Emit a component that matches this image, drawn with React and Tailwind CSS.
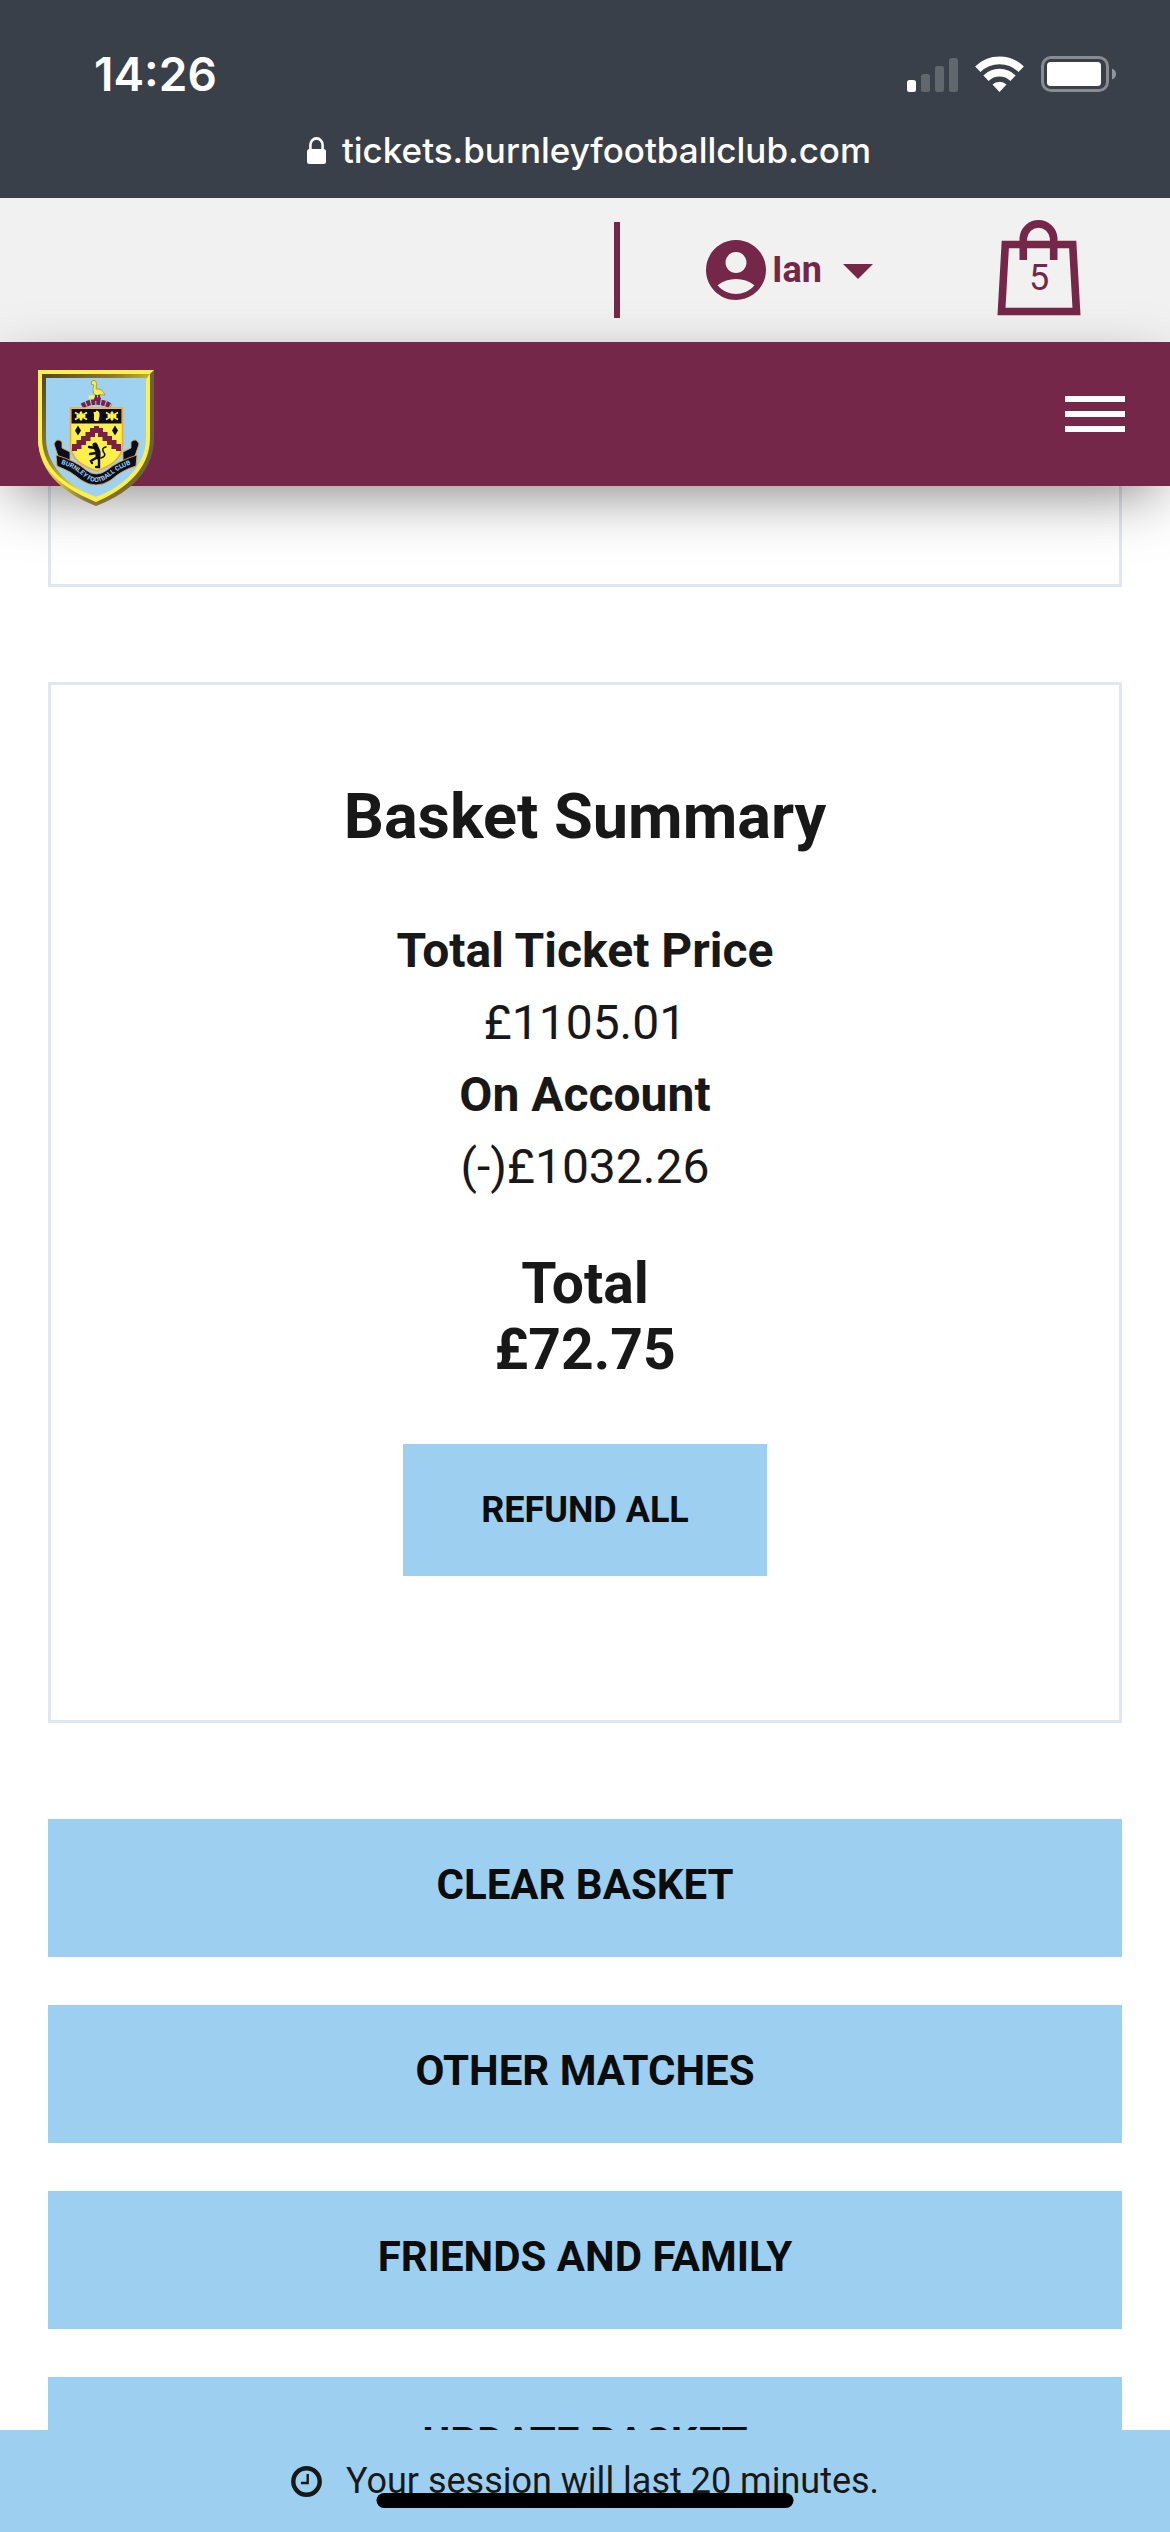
import { MdAccountCircle, MdArrowDropDown } from "react-icons/md";

const actions = ["Clear Basket", "Other Matches", "Friends and Family", "Update Basket"];

function SignalIcon() {
  return (
    <svg width="51" height="34" viewBox="0 0 51 34" fill="#fff">
      <rect x="0" y="22" width="9" height="12" rx="2.5" />
      <g opacity="0.2">
        <rect x="14" y="16" width="9" height="18" rx="2.5" />
        <rect x="28" y="8" width="9" height="26" rx="2.5" />
        <rect x="42" y="0" width="9" height="34" rx="2.5" />
      </g>
    </svg>
  );
}

function WifiIcon() {
  return (
    <svg width="49" height="36" viewBox="0 0 49 36">
      <g fill="none" stroke="#fff" strokeWidth="7.6">
        <path d="M2.8 13.2 A31 31 0 0 1 46.2 13.2" />
        <path d="M11 22.2 A19.2 19.2 0 0 1 38 22.2" />
      </g>
      <path d="M24.5 36 L17.5 28.6 A10 10 0 0 1 31.5 28.6 Z" fill="#fff" />
    </svg>
  );
}

function BatteryIcon() {
  return (
    <svg width="75" height="36" viewBox="0 0 75 36">
      <rect x="1.5" y="1.5" width="65" height="33" rx="8.5" fill="none" stroke="#fff" strokeOpacity="0.4" strokeWidth="3" />
      <rect x="6" y="6" width="54" height="24" rx="3.5" fill="#fff" />
      <path d="M71 12.5 Q75 14 75 18 Q75 22 71 23.5 Z" fill="#fff" fillOpacity="0.45" />
    </svg>
  );
}

function LockIcon() {
  return (
    <svg width="19" height="27" viewBox="0 0 19 27">
      <rect x="0" y="12" width="19" height="15" rx="2.5" fill="#fff" />
      <path d="M3.4 13 V8 A6.1 6.6 0 0 1 15.6 8 V13" fill="none" stroke="#fff" strokeWidth="2.6" />
    </svg>
  );
}

function StatusBar() {
  return (
    <div className="bg-[#3a4049] text-white font-[Inter,sans-serif]">
      <div className="flex items-center justify-between pt-[46px] pl-[94px] pr-[54px]">
        <span className="text-[46px] leading-[56px] font-semibold">14:26</span>
        <div className="flex items-end gap-[17px]">
          <SignalIcon />
          <WifiIcon />
          <BatteryIcon />
        </div>
      </div>
      <div className="flex items-center justify-center gap-4 pt-6 pb-6 pl-2">
        <LockIcon />
        <span className="text-[35px] leading-[48px] font-medium">tickets.burnleyfootballclub.com</span>
      </div>
    </div>
  );
}

function BagIcon() {
  return (
    <svg width="84" height="98" viewBox="0 0 84 98" fill="none" stroke="#75274a">
      <path d="M8.3 26.5 H75.7 L79.5 93.5 H4.5 Z" strokeWidth="7.6" />
      <path d="M26.3 42 V20 A15.3 16 0 0 1 56.7 20 V42" strokeWidth="7.6" />
    </svg>
  );
}

function AccountBar() {
  return (
    <div className="flex h-36 items-center bg-[#f1f1f1] text-[#75274a] pr-[89px]">
      <div className="ml-auto h-24 w-[6px] bg-[#75274a]" />
      <button type="button" className="ml-20 flex items-center">
        <MdAccountCircle size={72} />
        <span className="text-[36px] leading-[48px] font-bold">Ian</span>
        <MdArrowDropDown size={72} />
      </button>
      <a href="#basket" className="relative ml-[103px] pb-1.5">
        <BagIcon />
        <span className="absolute inset-x-0 top-9 text-center text-[36px] leading-[48px]">5</span>
      </a>
    </div>
  );
}

function Bee({ x }) {
  return (
    <g fill="#fdf04b" stroke="#fdf04b" transform={`translate(${x} 46)`}>
      <ellipse cx="0" cy="0" rx="1.6" ry="4.6" strokeWidth="0.4" />
      <path d="M-6 -3.5 L6 3.5 M6 -3.5 L-6 3.5 M-4.5 0 H4.5" strokeWidth="1.8" />
    </g>
  );
}

function ClubCrest() {
  return (
    <svg width="116" height="136" viewBox="0 0 116 136" role="img" aria-label="Burnley Football Club">
      <defs>
        <linearGradient id="rim" x1="0" y1="0" x2="1" y2="0">
          <stop offset="0" stopColor="#fdf04b" />
          <stop offset="0.4" stopColor="#8a7a36" />
          <stop offset="1" stopColor="#6e6032" />
        </linearGradient>
        <linearGradient id="bevel" x1="0" y1="0" x2="1" y2="1">
          <stop offset="0" stopColor="#4f4528" />
          <stop offset="0.35" stopColor="#8c7c38" />
          <stop offset="0.7" stopColor="#fdf04b" />
          <stop offset="1" stopColor="#fdf04b" />
        </linearGradient>
        <path id="motto" d="M17 92 Q36 97 46 107 Q58 117 71 107 Q81 98 99 92" />
      </defs>
      <path d="M0 0 H116 V68 C116 106 84 126 58 136 C32 126 0 106 0 68 Z" fill="url(#rim)" />
      <path d="M0 0 H116 L112 4 V68 C112 102 82 122 58 132 C34 122 0 104 0 68 Z" fill="#fdf04b" />
      <path d="M4 4 H112 L108 9 V68 C108 99 80 119 58 127 C33 119 4 101 4 68 Z" fill="url(#bevel)" />
      <path d="M8 8 H108 V68 C108 99 80 119 58 127 C36 119 8 99 8 68 Z" fill="#9fd2f0" />

      {/* stork and wreath */}
      <path d="M54 11 Q58 9 58.5 14 L58 19 Q64 18 67 25 L62 24.5 Q58 27 55.5 23 Q54 19 56 15 L53 14 Z" fill="#fdf04b" stroke="#a58d2c" strokeWidth="0.8" />
      <path d="M58 25 V31 M61 25 V31 M56 28.5 H63" stroke="#7a1f45" strokeWidth="2" />
      <ellipse cx="53.5" cy="27" rx="3" ry="2" fill="#fdf04b" />
      <path d="M44 36 Q58 28 73 36" fill="none" stroke="#7a1f45" strokeWidth="5.5" strokeDasharray="4 1" />

      {/* shield */}
      <path d="M32.5 38 H84.5 V74 C84.5 90 72 96 58.5 101 C45 96 32.5 90 32.5 74 Z" fill="#fdf04b" stroke="#f2a93b" strokeWidth="1.6" />
      <path d="M33.5 39 H83.5 V53.5 H33.5 Z" fill="#0b0c1f" />
      <Bee x={43} />
      <Bee x={74} />
      <path d="M56 50 V45 L55.5 42 L57.5 42 L58.5 40.5 L60 41 L61.5 43 V46 L60.5 51 H57 Z" fill="#fdf04b" />
      <path
        d="M36.5 81 V76.5 H41 V72.5 H45.5 V68.5 H50 V64.5 H54.5 V60.5 H62.5 V64.5 H67 V68.5 H71.5 V72.5 H76 V76.5 H80.5 V81"
        fill="none"
        stroke="#7a1f45"
        strokeWidth="5"
      />
      <path d="M56 56 H61 V60 H56 Z" fill="#7a1f45" />
      <path d="M40 55.5 L43 60.5 L40 65.5 L37 60.5 Z M77 55.5 L80 60.5 L77 65.5 L74 60.5 Z" fill="#0b0c1f" />
      <g fill="none" stroke="#0b0c1f" strokeLinecap="round">
        <path d="M57 75 L60 82 L60 87" strokeWidth="5" />
        <path d="M57 78 L51 77 M58 83 L52 84 M58 88 L53 91 L54 93 M61 88 L61 97 L58 97" strokeWidth="2.4" />
        <path d="M63 88 Q69 86 65.5 82 Q63 78 68 77" strokeWidth="1.5" />
      </g>

      {/* scroll */}
      <g fill="#0b0c1f" stroke="#e0a93e" strokeWidth="0.9">
        <path d="M16 74 Q19 67 24 72 V78 L32 82 V91 L21 89 Z" />
        <path d="M101 74 Q98 67 93 72 V78 L85 82 V91 L96 89 Z" />
        <path d="M18 85 Q38 91 48 100 Q58 108 69 100 Q80 91 99 85 L98 96 Q84 100 73 110 Q58 120 43 110 Q33 101 19 96 Z" />
      </g>
      <text fill="#9fd2f0" fontFamily="Roboto, sans-serif" fontSize="6.5" fontWeight="700">
        <textPath href="#motto" startOffset="50%" textAnchor="middle">BURNLEY FOOTBALL CLUB</textPath>
      </text>
    </svg>
  );
}

function NavBar() {
  return (
    <nav className="relative z-10 flex h-36 items-center justify-between bg-[#75274a] pl-[38px] pr-[45px] shadow-[0_18px_60px_-12px_rgba(0,0,0,0.5)]">
      <a href="#home" className="mt-7 h-[116px]">
        <ClubCrest />
      </a>
      <button type="button" aria-label="Menu" className="flex w-[60px] flex-col gap-[9px]">
        <span className="h-[6px] bg-white" />
        <span className="h-[6px] bg-white" />
        <span className="h-[6px] bg-white" />
      </button>
    </nav>
  );
}

function BasketSummary() {
  return (
    <section className="flex flex-col items-center border-3 border-[#e2e6f0] pt-[94px] pb-36 text-[#181818]">
      <h2 className="text-[63px] leading-[76px] font-bold">Basket Summary</h2>
      <dl className="mt-[60px] text-center text-[48px] leading-[72px]">
        <dt className="font-bold">Total Ticket Price</dt>
        <dd>£1105.01</dd>
        <dt className="font-bold">On Account</dt>
        <dd>(-)£1032.26</dd>
      </dl>
      <p className="mt-12 text-center text-[57px] leading-[66px] font-bold">
        Total
        <br />
        £72.75
      </p>
      <button type="button" className="mt-[61px] h-[132px] w-[364px] bg-[#9dcff0] text-[36px] font-bold text-[#0c0c0c] uppercase">
        Refund All
      </button>
    </section>
  );
}

function SessionBar() {
  return (
    <footer className="fixed inset-x-0 bottom-0 z-20 flex h-[102px] items-center justify-center gap-6 bg-[#9dcff0] text-[#181818]">
      <svg width="31" height="31" viewBox="0 0 31 31" fill="none" stroke="currentColor">
        <circle cx="15.5" cy="15.5" r="13.2" strokeWidth="4.4" />
        <path d="M16.7 8 V17 H10" strokeWidth="2.4" />
      </svg>
      <p className="text-[36px] leading-[48px]">Your session will last 20 minutes.</p>
      <div className="absolute bottom-6 left-1/2 h-[15px] w-[417px] -translate-x-1/2 rounded-full bg-black" />
    </footer>
  );
}

export default function App() {
  return (
    <div className="h-screen overflow-hidden bg-white font-[Roboto,sans-serif]">
      <StatusBar />
      <AccountBar />
      <NavBar />
      <main className="px-12">
        <div className="h-[101px] border-3 border-t-0 border-[#e2e6f0]" />
        <div className="mt-[95px]">
          <BasketSummary />
        </div>
        <div className="mt-24 flex flex-col gap-12">
          {actions.map((label) => (
            <button key={label} type="button" className="h-[138px] w-full bg-[#9dcff0] pb-2 text-[42px] font-bold text-[#0c0c0c] uppercase">
              {label}
            </button>
          ))}
        </div>
      </main>
      <SessionBar />
    </div>
  );
}
